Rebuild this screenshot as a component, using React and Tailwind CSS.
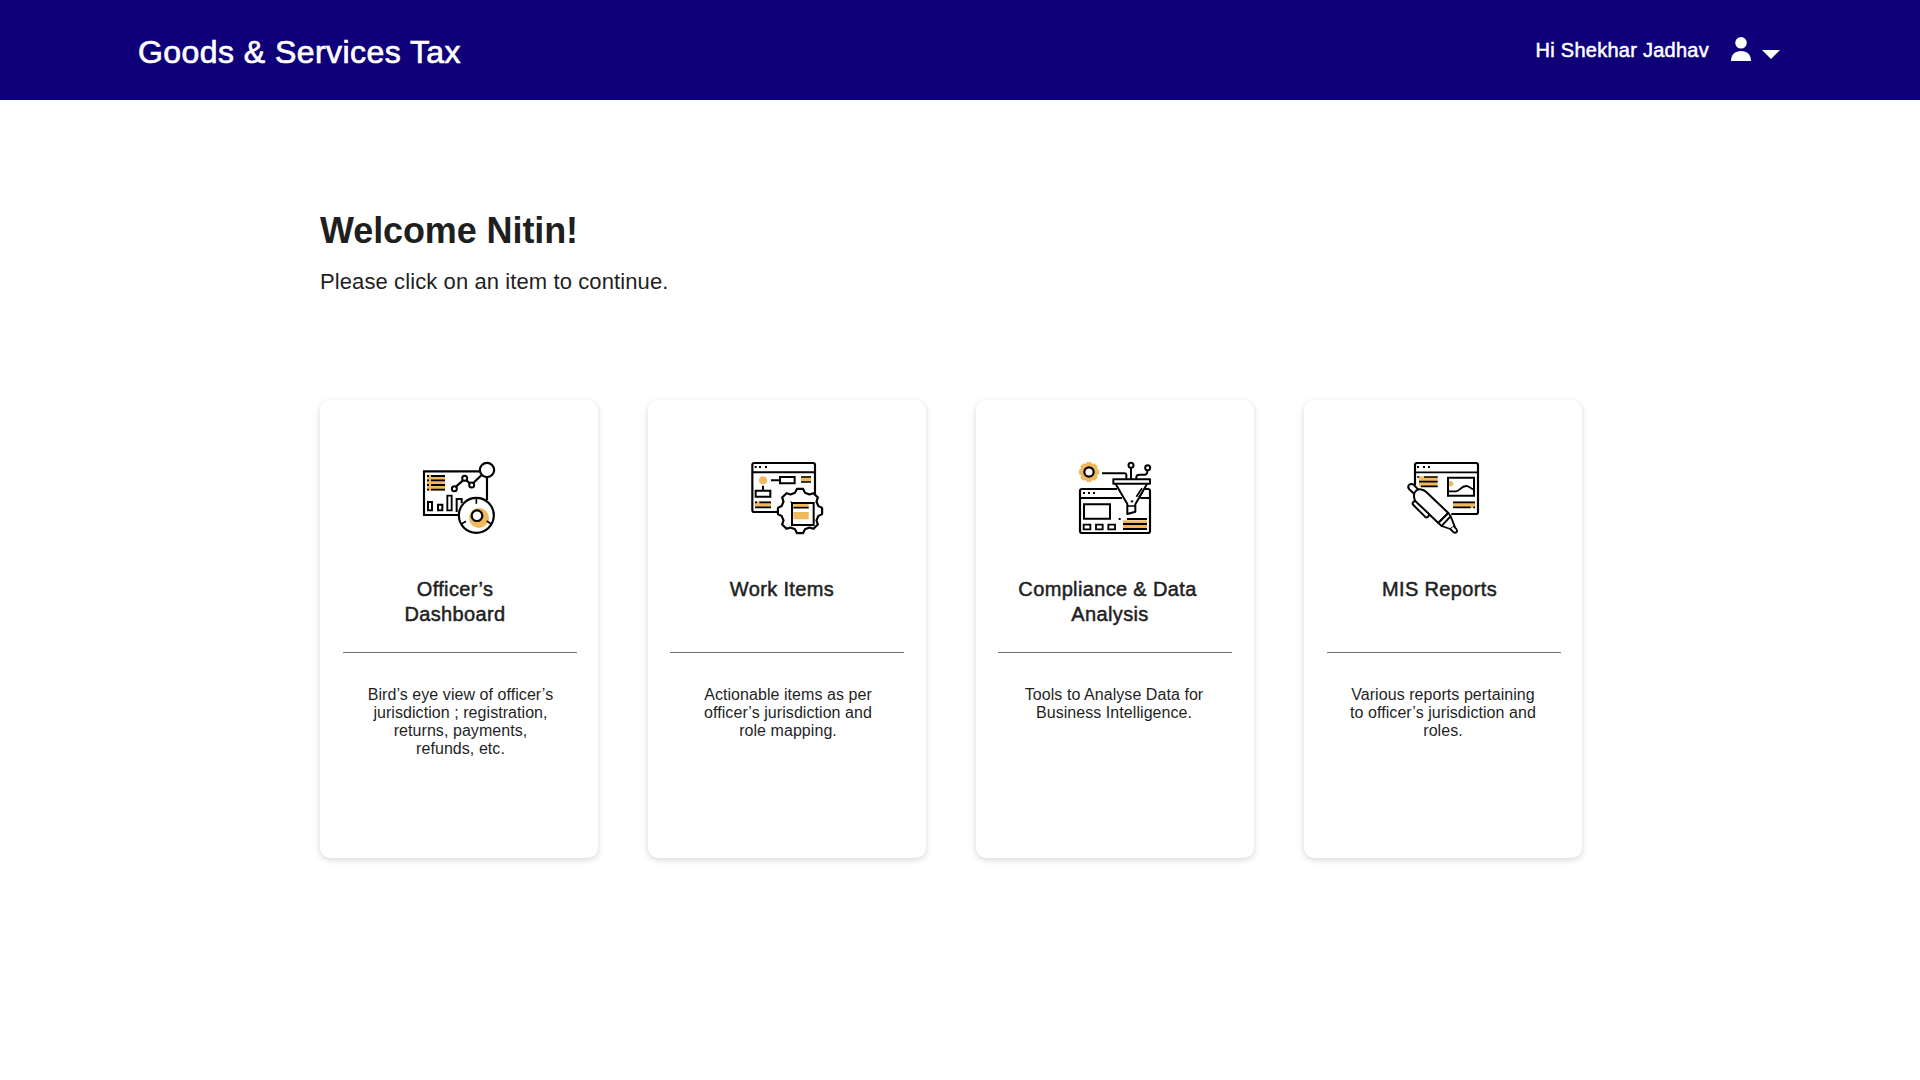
import React from "react";

const GOLD = "#f0b95b";

// Outline of a gear with the given number of teeth.
function gearPath(cx, cy, outer, inner, teeth, tip, root) {
  const points = [];
  for (let i = 0; i < teeth; i++) {
    const a = (360 / teeth) * i - 90;
    [
      [a - root, inner],
      [a - tip, outer],
      [a + tip, outer],
      [a + root, inner],
    ].forEach(([deg, r]) => {
      const t = (deg * Math.PI) / 180;
      points.push(`${(cx + r * Math.cos(t)).toFixed(1)} ${(cy + r * Math.sin(t)).toFixed(1)}`);
    });
  }
  return `M${points.join("L")}Z`;
}

function Icon({ children }) {
  return (
    <svg viewBox="0 0 300 285" className="block h-[95px] w-[100px] shrink-0" fill="none" stroke="#000" strokeWidth="6">
      {children}
    </svg>
  );
}

function DashboardIcon() {
  return (
    <Icon>
      <path d="M208 64H42V195H150M231 82V150" strokeWidth="6.5" />
      <path d="M51 75H105V122H51Z" fill={GOLD} stroke="none" />
      <path d="M51 78H105M51 91H105M51 105H105M51 119H105" strokeWidth="5.5" />
      <path d="M60 74V123" stroke={GOLD} strokeWidth="6" />
      <path d="M54 156H66V181H54ZM84 164H97V181H84ZM140 186V147H155V160" strokeWidth="6" />
      <path d="M112 137H125V181H112Z" strokeWidth="5.5" />
      <path d="M138 110L159 91M169 91L180 100M190 99L214 76" strokeWidth="6.5" />
      <circle cx="133" cy="116" r="7.5" />
      <circle cx="164" cy="85" r="7.5" />
      <circle cx="185" cy="105" r="7.5" />
      <circle cx="231" cy="60" r="21.5" strokeWidth="6.5" />
      <circle cx="199" cy="196" r="52.5" fill="#fff" strokeWidth="6.5" />
      <circle cx="207" cy="204" r="30" fill={GOLD} stroke="none" />
      <circle cx="201" cy="197" r="16" fill="#fff" strokeWidth="6.5" />
      <path d="M199 145V161M153 223L168 214M243 221L230 213" strokeWidth="5" />
    </Icon>
  );
}

function WorkItemsIcon() {
  return (
    <Icon>
      <path d="M120 186H42Q37 186 37 180V45Q37 39 43 39H219Q225 39 225 45V135" strokeLinecap="round" strokeWidth="6.5" />
      <path d="M37 67H225" />
      <path d="M44 51H50M57 51H63M75 51H81" strokeWidth="5.5" />
      <circle cx="69" cy="91" r="12" fill={GOLD} stroke="none" />
      <path d="M69 107V121M47 122H91V140H47ZM93 91H119M120 81H164V100H120Z" strokeWidth="6" />
      <path d="M183 78H213V96H183Z" fill={GOLD} stroke="none" />
      <path d="M183 81H213M183 96H213" strokeWidth="5" />
      <path d="M45 154H93V174H45Z" fill={GOLD} stroke="none" />
      <path d="M45 157H51M58 157H93M45 172H93" strokeWidth="5" />
      <path d={gearPath(180, 183, 67, 57, 8, 8, 15)} fill="#fff" strokeLinejoin="round" strokeWidth="6.5" />
      <path d="M156 159H221V225H156Z" />
      <path d="M160 162H206V174H160ZM160 186H206V208H160Z" fill={GOLD} stroke="none" />
      <path d="M160 173H206" strokeWidth="5" />
      <path d="M151 156H156" strokeWidth="3" />
    </Icon>
  );
}

function ComplianceIcon() {
  return (
    <Icon>
      <path d={gearPath(69, 66, 31, 27, 8, 13, 18)} fill={GOLD} stroke="none" />
      <circle cx="69" cy="66" r="14" fill="#fff" strokeWidth="6.5" />
      <path d="M108 70H176Q181 70 181 76V87M195 54V87M211 87V82Q211 74 220 74H237Q244 74 244 61" strokeWidth="6" />
      <circle cx="195" cy="46" r="7.5" />
      <circle cx="245" cy="53" r="7.5" />
      <path d="M153 117H48Q42 117 42 123V243Q42 249 48 249H246Q252 249 252 243V123Q252 117 246 117H237M42 144H168M223 144H252" strokeWidth="6.5" />
      <path d="M51 129H57M66 129H72M81 129H87" strokeWidth="5.5" />
      <path d="M54 163H132V206H54Z" />
      <path d="M53 224H73V238H53ZM90 224H110V238H90ZM127 224H147V238H127Z" strokeWidth="5.5" />
      <path d="M142 88H252V101H142Z" fill="#fff" strokeLinejoin="round" />
      <path d="M149 102L184 162V192L208 185V163L243 102" strokeLinejoin="round" />
      <path d="M184 168H208M228 115L211 140M229 127L219 142" strokeWidth="5" />
      <circle cx="198" cy="154" r="3.5" fill="#000" stroke="none" />
      <path d="M171 211H243V240H171Z" fill={GOLD} stroke="none" />
      <path d="M183 207H243M171 222H243M171 237H243M158 207H164" strokeWidth="5.5" />
    </Icon>
  );
}

function ReportsIcon() {
  return (
    <Icon>
      <path d="M57 105V45Q57 39 63 39H240Q246 39 246 45V186Q246 192 240 192H166" strokeWidth="6.5" />
      <path d="M57 67H246" strokeWidth="5.5" />
      <path d="M63 51H69M81 51H87M96 51H102" strokeWidth="5.5" />
      <path d="M69 79H125V110H69Z" fill={GOLD} stroke="none" />
      <path d="M63 81H70M84 81H125M69 95H125M75 109H125" strokeWidth="5" />
      <circle cx="164" cy="101" r="8" fill={GOLD} stroke="none" />
      <path d="M156 83H234V137H156Z" />
      <path d="M158 124H180C191 124 194 108 211 108C221 108 223 117 233 118" strokeWidth="5.5" />
      <path d="M171 155H237V174H171Z" fill={GOLD} stroke="none" />
      <path d="M171 157H237M171 172H224M232 172H237" strokeWidth="5" />
      <g fill="#fff" strokeLinejoin="round" strokeLinecap="round">
        <path d="M56 153L51 157Q48 161 52 165L87 200Q93 205 97 199L99 195" />
        <path d="M54 131L39 117Q34 110 40 104Q47 99 54 105L67 119" />
        <path d="M57 152C53 141 52 129 60 122C69 115 82 118 90 125L157 189L127 219Z" />
        <path d="M157 189L127 219L137 228L164 199Z" strokeWidth="5.5" />
        <path d="M164 199L176 229L163 237L137 228Z" strokeWidth="5.5" />
        <path d="M163 237L173 247Q178 250 182 246Q185 242 181 237L174 229" strokeWidth="5.5" />
      </g>
    </Icon>
  );
}

const cards = [
  {
    icon: <DashboardIcon />,
    title: ["Officer’s", "Dashboard"],
    lines: ["Bird’s eye view of officer’s", "jurisdiction ; registration,", "returns, payments,", "refunds, etc."],
    iconClass: "pl-[90px]",
    titleClass: "pr-2",
    secondClass: "",
    ruleClass: "ml-[22.5px]",
    textClass: "pl-[3px]",
  },
  {
    icon: <WorkItemsIcon />,
    title: ["Work Items"],
    lines: ["Actionable items as per", "officer’s jurisdiction and", "role mapping."],
    iconClass: "pl-[92px]",
    titleClass: "pr-2.5",
    secondClass: "",
    ruleClass: "ml-[21.5px]",
    textClass: "pl-0.5",
  },
  {
    icon: <ComplianceIcon />,
    title: ["Compliance & Data", "Analysis"],
    lines: ["Tools to Analyse Data for", "Business Intelligence."],
    iconClass: "pl-[90px]",
    titleClass: "pr-[15px]",
    secondClass: "pl-[5px]",
    ruleClass: "ml-[21.5px]",
    textClass: "pr-0.5",
  },
  {
    icon: <ReportsIcon />,
    title: ["MIS Reports"],
    lines: ["Various reports pertaining", "to officer’s jurisdiction and", "roles."],
    iconClass: "pl-[92px]",
    titleClass: "pr-[7px]",
    secondClass: "",
    ruleClass: "ml-[22.5px]",
    textClass: "",
  },
];

function Card({ card }) {
  return (
    <article className="flex h-[458px] w-[278px] flex-col rounded-[10px] bg-white pt-[50px] text-center shadow-[0_2px_6px_rgba(0,0,0,0.16)]">
      <div className={card.iconClass}>{card.icon}</div>
      <h2
        className={`mt-8 h-[50px] text-[20px] leading-[25px] font-normal tracking-[0.35px] [-webkit-text-stroke:0.5px_#1f1f1f] ${card.titleClass}`}
      >
        <span className="block whitespace-nowrap">{card.title[0]}</span>
        {card.title[1] && <span className={`block whitespace-nowrap ${card.secondClass}`}>{card.title[1]}</span>}
      </h2>
      <div className={`mt-[25px] h-px w-[234px] shrink-0 bg-[#707070] ${card.ruleClass}`} />
      <p className={`mt-[33px] text-[16px] leading-[18px] tracking-[0.06px] ${card.textClass}`}>
        {card.lines.map((line) => (
          <span key={line} className="block whitespace-nowrap">
            {line}
          </span>
        ))}
      </p>
    </article>
  );
}

export default function App() {
  return (
    <div className="h-[1080px] w-[1920px] overflow-hidden bg-white font-['Liberation_Sans',Arial,sans-serif] text-[#1f1f1f]">
      <header className="flex h-[100px] items-center justify-between bg-[#0f007a] pr-[140px] pl-[138px] text-white">
        <div className="pt-1 text-[32px] leading-10 tracking-[0.44px] whitespace-nowrap [-webkit-text-stroke:0.7px_#fff]">
          Goods &amp; Services Tax
        </div>
        <div className="flex items-center">
          <span className="text-[20px] leading-6 tracking-[0.26px] whitespace-nowrap [-webkit-text-stroke:0.5px_#fff]">
            Hi Shekhar Jadhav
          </span>
          <svg viewBox="0 0 20 24" className="-mt-0.5 ml-[22px] h-6 w-5" fill="#fff">
            <circle cx="10" cy="5.8" r="5.8" />
            <path d="M0 24C0 17.5 4 14 10 14S20 17.5 20 24Z" />
          </svg>
          <svg viewBox="0 0 18 9" className="mt-2 ml-[11px] h-[9px] w-[18px]" fill="#fff">
            <path d="M0 0H18L9 9Z" />
          </svg>
        </div>
      </header>
      <main className="pt-[109px] pl-[320px]">
        <h1 className="text-[36px] leading-[44px] font-bold tracking-[-0.1px]">Welcome Nitin!</h1>
        <p className="mt-4 text-[22px] leading-[26px] tracking-[0.1px]">Please click on an item to continue.</p>
        <section className="mt-[105px] flex gap-[50px]">
          {cards.map((card) => (
            <Card key={card.title[0]} card={card} />
          ))}
        </section>
      </main>
    </div>
  );
}
